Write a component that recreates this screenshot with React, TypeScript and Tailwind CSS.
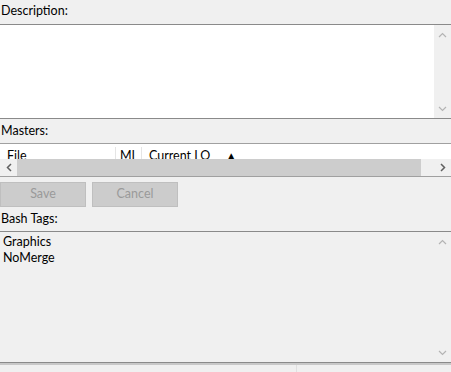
import React from "react";

const ChevUp = ({ color = "#b4b4b4" }: { color?: string }) => (
  <svg width="9" height="6" viewBox="0 0 9 6"><path d="M1 5 L4.5 1.5 L8 5" fill="none" stroke={color} strokeWidth="1.2" /></svg>
);
const ChevDown = ({ color = "#b4b4b4" }: { color?: string }) => (
  <svg width="9" height="6" viewBox="0 0 9 6"><path d="M1 1 L4.5 4.5 L8 1" fill="none" stroke={color} strokeWidth="1.2" /></svg>
);
const ChevLeft = () => (
  <svg width="6" height="9" viewBox="0 0 6 9"><path d="M5 1 L1.5 4.5 L5 8" fill="none" stroke="#606060" strokeWidth="1.5" /></svg>
);
const ChevRight = () => (
  <svg width="6" height="9" viewBox="0 0 6 9"><path d="M1 1 L4.5 4.5 L1 8" fill="none" stroke="#606060" strokeWidth="1.5" /></svg>
);

function VScroll() {
  return (
    <div className="w-[17px] shrink-0 bg-[#f0f0f0] flex flex-col items-center justify-between pt-[7px] pb-[6px]">
      <ChevUp />
      <ChevDown />
    </div>
  );
}

export default function App() {
  return (
    <div
      className="w-[451px] h-[372px] bg-[#f0f0f0] text-[12.5px] text-black overflow-hidden flex flex-col"
      style={{ fontFamily: 'Lato, "Noto Sans", sans-serif' }}
    >
      <div className="h-[24px] pt-[2px] pl-[1px] leading-[17px]">Description:</div>
      <div className="h-[95px] border-t border-b border-[#8a8a8a] bg-white flex">
        <div className="flex-1" />
        <VScroll />
      </div>
      <div className="h-[24px] pt-[3px] pl-[1px] leading-[17px]">Masters:</div>
      <div className="h-[34px] border-t border-b border-[#a0a0a0] bg-white flex flex-col">
        <div className="h-[15px] flex overflow-hidden leading-[17px] pt-[3px]">
          <div className="w-[116px] pl-[7px] border-r border-[#e5e5e5]">File</div>
          <div className="w-[26px] pl-[4px] border-r border-[#e5e5e5]">ML</div>
          <div className="pl-[7px] flex gap-[16px]">
            <span>Current LO</span>
            <span className="text-[10px]">▲</span>
          </div>
        </div>
        <div className="h-[17px] flex bg-[#f0f0f0]">
          <div className="w-[17px] flex items-center justify-center"><ChevLeft /></div>
          <div className="flex-1 bg-[#cdcdcd] mr-[13px]" />
          <div className="w-[17px] flex items-center justify-center"><ChevRight /></div>
        </div>
      </div>
      <div className="flex gap-[6px] pt-[5px]">
        <div className="w-[86px] h-[25px] bg-[#cccccc] border border-[#bfbfbf] text-[#9a9a9a] flex items-center justify-center">Save</div>
        <div className="w-[86px] h-[25px] bg-[#cccccc] border border-[#bfbfbf] text-[#9a9a9a] flex items-center justify-center">Cancel</div>
      </div>
      <div className="h-[24px] pt-[3px] pl-[1px] leading-[17px]">Bash Tags:</div>
      <div className="h-[132px] border-t border-b border-[#8a8a8a] bg-[#f0f0f0] flex">
        <div className="flex-1 pl-[3px] pt-[2px] leading-[16px]">
          <div>Graphics</div>
          <div>NoMerge</div>
        </div>
        <VScroll />
      </div>
      <div className="h-[2px] bg-[#c8c8c8]" />
      <div className="flex-1 flex">
        <div className="w-[297px] border-r border-[#e0e0e0]" />
      </div>
    </div>
  );
}
